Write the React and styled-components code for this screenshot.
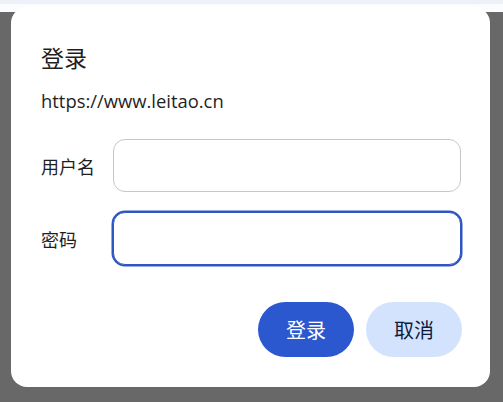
import React from "react";
import styled, { createGlobalStyle } from "styled-components";

const Global = createGlobalStyle`
  html, body {
    margin: 0;
    padding: 0;
  }
  body {
    width: 503px;
    height: 402px;
    overflow: hidden;
    background: linear-gradient(#eef2f8 0 4px, #fbfcfe 4px 12px, #686868 12px);
    font-family: "Noto Sans CJK SC", "Noto Sans", sans-serif;
    color: #1f1f1f;
  }
`;

const Dialog = styled.div`
  margin: 7px 0 0 11px;
  width: 479px;
  height: 380px;
  box-sizing: border-box;
  padding: 35px 29px 0 30px;
  background: #fff;
  border-radius: 16px;
  display: flex;
  flex-direction: column;
`;

const Title = styled.h2`
  margin: 0;
  font-size: 23px;
  font-weight: 400;
  line-height: 30px;
`;

const Origin = styled.div`
  margin-top: 17px;
  font-family: "Open Sans", "Noto Sans CJK SC", sans-serif;
  font-size: 18.4px;
  line-height: 24px;
  color: #1f1f1f;
`;

const Form = styled.div`
  margin-top: 26px;
  display: flex;
  flex-direction: column;
  gap: 20px;
`;

const Row = styled.label`
  display: flex;
  align-items: center;
`;

const Label = styled.span`
  width: 72px;
  flex: none;
  font-size: 18px;
  line-height: 24px;
`;

const Field = styled.div`
  flex: 1;
  height: 53px;
  box-sizing: border-box;
  border-radius: 12px;
  border: 1.5px solid ${(p) => (p.$focused ? "#2f56c0" : "#c7c7c7")};
  box-shadow: ${(p) => (p.$focused ? "0 0 0 1.5px #2f56c0" : "none")};
  background: #fff;
`;

const Actions = styled.div`
  margin-top: 37px;
  display: flex;
  justify-content: flex-end;
  gap: 12px;
  margin-right: -1px;
`;

const Button = styled.button`
  width: 96px;
  height: 55px;
  border: none;
  border-radius: 28px;
  font-family: "Noto Sans CJK SC", sans-serif;
  font-size: 20px;
  cursor: pointer;
  background: ${(p) => (p.$primary ? "#2b58cf" : "#d3e3fd")};
  color: ${(p) => (p.$primary ? "#fff" : "#0b1d3f")};
`;

export default function App() {
  return (
    <>
      <Global />
      <Dialog>
        <Title>登录</Title>
        <Origin>https://www.leitao.cn</Origin>
        <Form>
          <Row>
            <Label>用户名</Label>
            <Field />
          </Row>
          <Row>
            <Label>密码</Label>
            <Field $focused />
          </Row>
        </Form>
        <Actions>
          <Button $primary>登录</Button>
          <Button>取消</Button>
        </Actions>
      </Dialog>
    </>
  );
}
